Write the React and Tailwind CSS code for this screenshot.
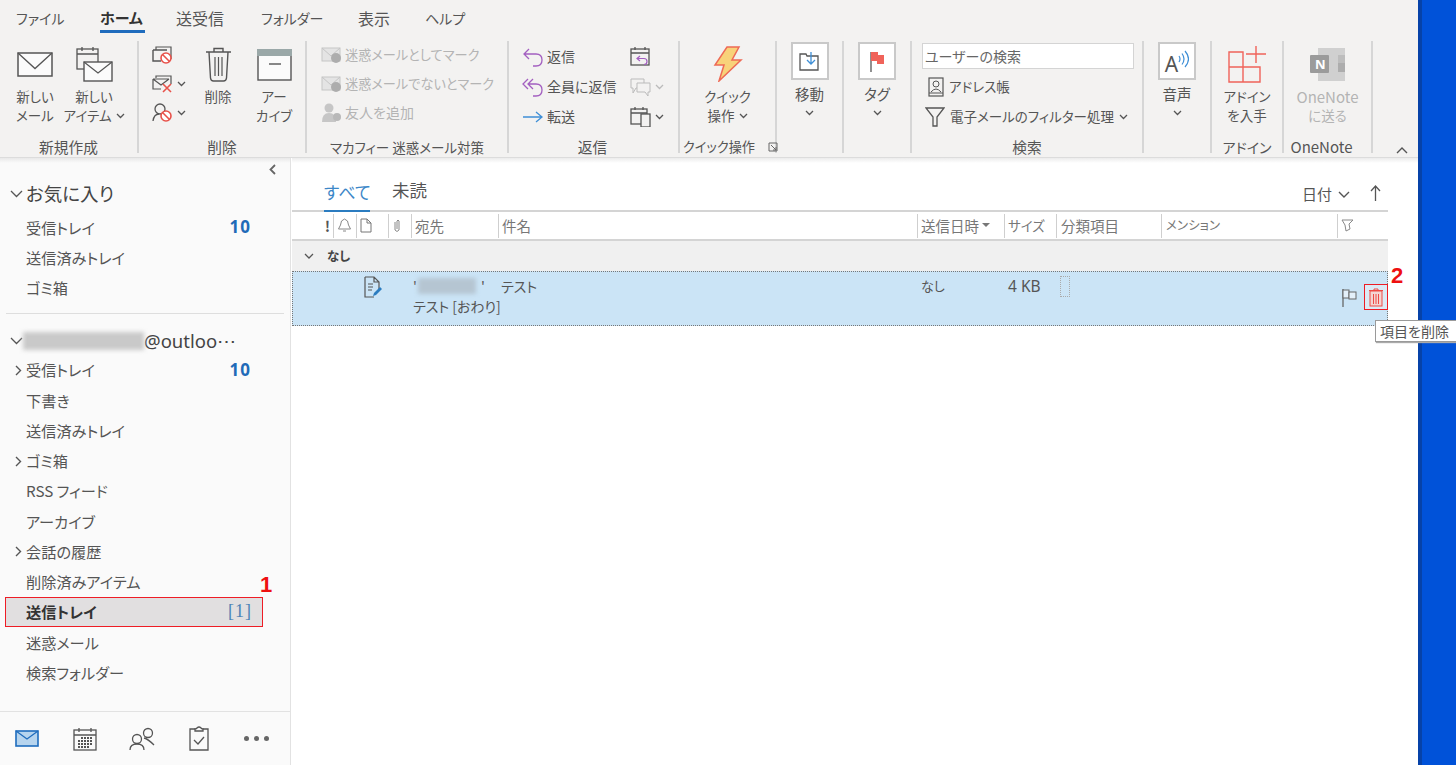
const font = { fontFamily: '"Noto Sans CJK JP","Noto Sans",sans-serif' };

const S = ({ w, h, children, className = "" }) => (
  <svg width={w} height={h} viewBox={`0 0 ${w} ${h}`} fill="none" className={`shrink-0 ${className}`}>{children}</svg>
);
const Chev = ({ c = "#555", className = "" }) => (
  <svg width="9" height="6" viewBox="0 0 9 6" fill="none" className={`shrink-0 ${className}`}><path d="M1 1l3.5 3.5L8 1" stroke={c} strokeWidth="1.3" /></svg>
);
const Big = ({ w, icon, lines, chev, gray, iconH = 46 }) => (
  <div className={`flex flex-col items-center shrink-0 ${gray ? "text-[#b4b4b4]" : ""}`} style={{ width: w }}>
    <div className="flex items-center justify-center" style={{ height: iconH }}>{icon}</div>
    {lines.map((l, i) => (
      <div key={i} className="h-[19px] leading-[19px] flex items-center gap-1 whitespace-nowrap">{l}{chev && i === lines.length - 1 && <Chev />}</div>
    ))}
  </div>
);
const Box = ({ children, label }) => (
  <div className="flex flex-col items-center">
    <div className="w-[38px] h-[38px] bg-white border-2 border-[#c9c9c9] flex items-center justify-center mt-[1px]">{children}</div>
    <div className="h-[19px] leading-[19px] mt-[4px] text-[14.5px]">{label}</div>
    <Chev className="mt-[7px]" />
  </div>
);
const Group = ({ w, label, children, className = "", labelClass = "text-[14.7px]" }) => (
  <div className="flex flex-col shrink-0 border-r-2 border-[#d6d6d6] h-[112px]" style={{ width: w }}>
    <div className={`h-[99px] shrink-0 flex ${className}`}>{children}</div>
    <div className={`h-[13px] leading-[14px] text-center whitespace-nowrap text-[#555] ${labelClass}`}>{label}</div>
  </div>
);
const Mail = ({ w = 36, h = 25 }) => (
  <S w={w} h={h}><rect x="1" y="1" width={w - 2} height={h - 2} fill="#fbfbfb" stroke="#555" strokeWidth="1.5" /><path d={`M1 1l${w / 2 - 1} ${h * 0.62}L${w - 1} 1`} stroke="#555" strokeWidth="1.3" /></S>
);
const NoSign = ({ x, y, r = 5 }) => (
  <g><circle cx={x} cy={y} r={r} fill="#fff" stroke="#e8524a" strokeWidth="1.6" /><path d={`M${x - r * 0.7} ${y - r * 0.7}L${x + r * 0.7} ${y + r * 0.7}`} stroke="#e8524a" strokeWidth="1.6" /></g>
);
const Row = ({ label, right, arrow }) => (
  <div className="h-[30.25px] flex items-center relative pl-[26px] pr-[39px]">
    {arrow && <svg width="7" height="11" viewBox="0 0 7 11" className="absolute left-[15px] top-[10px]" fill="none"><path d="M1 1l4.5 4.5L1 10" stroke="#555" strokeWidth="1.4" /></svg>}
    <span className="flex-1 whitespace-nowrap">{label}</span>
    {right}
  </div>
);
const Cnt = () => <span className="text-[#1f6bb8] font-bold text-[17px] tracking-[1px] [font-family:'Noto_Sans',sans-serif]">10</span>;

const Col = ({ w, children, className = "" }) => (
  <div className={`h-[24px] shrink-0 border-l border-[#cfcfcf] flex items-center pl-[3px] whitespace-nowrap ${className}`} style={{ width: w }}>{children}</div>
);

const Trash = ({ c = "#555", w = 27, h = 36 }) => (
  <svg width={w} height={h} viewBox="0 0 27 36" fill="none">
    <path d="M1 6h25M9 6V2.5h9V6M4 6l1.5 26q.3 3 3 3h10q2.700 0 3-3L23 6" stroke={c} strokeWidth="1.4" />
    <path d="M10 11v19M13.500 11v19M17 11v19" stroke={c} strokeWidth="1.2" />
  </svg>
);

export default function App() {
  return (
    <div className="w-[1456px] h-[765px] overflow-hidden flex relative text-[13.5px] text-[#555] [font-feature-settings:'palt'] bg-white" style={font}>
      <div className="w-[1418px] shrink-0 flex flex-col">
        {/* Ribbon */}
        <div className="h-[158px] bg-[#f3f2f1] shrink-0 border-b border-[#dcdcdc]">
          <div className="h-[36px] flex items-start pt-[7px] pl-[16px] text-[14px] leading-[22px] text-[#555]">
            <span className="w-[84px]">ファイル</span>
            <span className="w-[76px] relative font-bold text-[#333] text-[15px]">ホーム<span className="absolute left-0 top-[23px] w-[45px] h-[3px] bg-[#1f6cbd]" /></span>
            <span className="w-[85px] text-[16px]">送受信</span>
            <span className="w-[97px]">フォルダー</span>
            <span className="w-[67px] text-[16px]">表示</span>
            <span>ヘルプ</span>
          </div>
          <div className="flex pt-[5px] relative">
            <Group w={139} label="新規作成" className="pl-[8px]">
              <Big w={54} icon={<Mail />} lines={["新しい", "メール"]} />
              <Big w={64} icon={
                <S w={37} h={36}><rect x="1" y="3" width="21" height="20" fill="#f3f2f1" stroke="#555" strokeWidth="1.3" /><path d="M1 8h21M6 1v4M17 1v4" stroke="#555" strokeWidth="1.3" /><rect x="8" y="16" width="28" height="19" fill="#fbfbfb" stroke="#555" strokeWidth="1.4" /><path d="M8 16l14 11 14-11" stroke="#555" strokeWidth="1.2" /></S>
              } lines={["新しい", "アイテム"]} chev />
            </Group>
            <Group w={168} label="削除" className="pl-[13px]">
              <div className="w-[44px] flex flex-col pt-[3px] gap-[8px]">
                <div className="flex items-center gap-1 h-[21px]"><S w={21} h={18}><path d="M4 4V1h15v12" stroke="#555" strokeWidth="1.2" /><path d="M1 4h14M1 4v11h8" stroke="#555" strokeWidth="1.4" /><NoSign x={14} y={12} r={5} /></S></div>
                <div className="flex items-center gap-1 h-[21px]"><S w={21} h={18}><path d="M4 3V1h15v8" stroke="#555" strokeWidth="1.2" /><path d="M1 4v10h8M1 4h16M1 4l8 6 8-6" stroke="#555" strokeWidth="1.2" /><path d="M11 9l8 8M19 9l-8 8" stroke="#e8524a" strokeWidth="1.6" /></S><Chev /></div>
                <div className="flex items-center gap-1 h-[21px]"><S w={21} h={20}><circle cx="8" cy="6" r="5" stroke="#555" strokeWidth="1.3" /><path d="M1 18q1-7 6-7" stroke="#555" strokeWidth="1.3" /><NoSign x={14} y={13} r={5} /></S><Chev /></div>
              </div>
              <Big w={44} icon={<Trash />} lines={["削除"]} />
              <div className="w-[8px]" />
              <Big w={52} icon={
                <S w={37} h={33}><rect x="2" y="6" width="33" height="26" fill="#fbfbfb" stroke="#555" strokeWidth="1.4" /><rect x="1" y="1" width="35" height="7" fill="#9aa8a8" /><path d="M13 16h12" stroke="#555" strokeWidth="1.4" /></S>
              } lines={["アー", "カイブ"]} />
            </Group>
            <Group w={202} label="マカフィー 迷惑メール対策" className="flex-col pl-[14px] pt-[3px] text-[#b4b4b4] gap-[8px]" labelClass="text-[13.5px]">
              {[["迷惑メールとしてマーク", "M"], ["迷惑メールでないとマーク", "N"], ["友人を追加", "F"]].map(([t, k]) => (
                <div key={k} className={`flex items-center gap-[3px] h-[21px] whitespace-nowrap ${k === "F" ? "text-[14px]" : "text-[13.2px]"}`}>
                  {k === "F" ? (
                    <S w={21} h={20}><circle cx="8" cy="5" r="4.500" fill="#c6c6c6" /><path d="M1 19q0-9 7-9t7 9z" fill="#c6c6c6" /><circle cx="16" cy="14" r="4" fill="#b8b8b8" /></S>
                  ) : (
                    <S w={21} h={18}><rect x="1" y="2" width="18" height="13" fill="#e4e4e4" stroke="#c6c6c6" /><path d="M1 2l9 8 9-8" stroke="#c6c6c6" /><circle cx="15" cy="12" r="5" fill="#adadad" /></S>
                  )}
                  {t}
                </div>
              ))}
            </Group>
            <Group w={171} label="返信" className="pl-[13px] pt-[5px] text-[14px]" labelClass="text-[14.7px] pr-[2px]">
              <div className="w-[108px] flex flex-col gap-[9px]">
                {[
                  ["返信", <path key="a" d="M7 2L2 7l5 5M2 7h12q6 0 6 6t-6 6h-3" stroke="#a35fc0" strokeWidth="1.3" />],
                  ["全員に返信", <path key="b" d="M6 2L1 7l5 5M11 2L6 7l5 5M6 7h8q6 0 6 6t-6 6h-3" stroke="#a35fc0" strokeWidth="1.3" />],
                  ["転送", <path key="c" d="M1 10h18M14 5l6 5-6 5" stroke="#3f8fd6" strokeWidth="1.3" />],
                ].map(([t, p]) => (
                  <div key={t} className="flex items-center gap-[3px] h-[21px] whitespace-nowrap"><S w={22} h={20}>{p}</S>{t}</div>
                ))}
              </div>
              <div className="flex flex-col gap-[9px]">
                <div className="h-[21px]"><S w={21} h={21}><rect x="1" y="3" width="18" height="16" stroke="#555" strokeWidth="1.3" /><path d="M1 7h18M5 1v3M15 1v3" stroke="#555" strokeWidth="1.3" /><path d="M10 10l-3 2.500 3 2.500M7 12.500h7q3 0 3 3t-3 3" stroke="#a35fc0" strokeWidth="1.2" /></S></div>
                <div className="h-[21px] flex items-center gap-1"><S w={21} h={20}><path d="M1 2h13v9H6l-3 5v-5H1z" stroke="#bbb" /><path d="M7 6h13v9h-2v4l-3-4H7z" fill="#f3f2f1" stroke="#bbb" /></S><Chev c="#bbb" /></div>
                <div className="h-[21px] flex items-center gap-1"><S w={21} h={21}><rect x="1" y="3" width="16" height="15" stroke="#555" strokeWidth="1.3" /><path d="M1 7h16M5 1v3M13 1v3" stroke="#555" strokeWidth="1.3" /><rect x="11" y="8" width="9" height="13" fill="#f3f2f1" stroke="#555" strokeWidth="1.3" /></S><Chev /></div>
              </div>
            </Group>
            <Group w={97} className="justify-center" labelClass="text-[13.2px]" label={<span className="flex items-center pl-[3px] gap-[13px]">クイック操作<S w={10} h={10}><path d="M1 1h8v8H1z M3 3l5 5M8 5v3H5" stroke="#666" /></S></span>}>
              <Big w={97} icon={
                <S w={30} h={36}><path d="M14 1h12l-7 13h9L6 35l5-16H2z" fill="#f8d27a" stroke="#ee6a55" strokeWidth="1.500" /></S>
              } lines={["クイック", "操作"]} chev />
            </Group>
            <Group w={67} className="justify-center">
              <Box label="移動"><S w={21} h={20}><path d="M1 3h6l1 2h11v14H1z" stroke="#555" strokeWidth="1.3" /><path d="M12 1v12M8 9l4 4 4-4" stroke="#3f8fd6" strokeWidth="1.3" /></S></Box>
            </Group>
            <Group w={68} className="justify-center">
              <Box label="タグ"><S w={17} h={21}><path d="M2 1v20" stroke="#555" strokeWidth="1.3" /><path d="M2 1h7v3h6v9H8v-3H2z" fill="#f0635a" /></S></Box>
            </Group>
            <Group w={232} label="検索" className="flex-col pl-[10px] pt-[2px]">
              <div className="w-[212px] h-[26px] bg-white border border-[#d4d4d4] pl-[2px] leading-[24px] text-[#666] text-[14px]">ユーザーの検索</div>
              <div className="flex items-center h-[21px] mt-[7px] pl-[6px] gap-[5px] whitespace-nowrap"><S w={16} h={20}><rect x="1" y="1" width="14" height="18" stroke="#555" strokeWidth="1.2" /><circle cx="8" cy="7" r="3" stroke="#555" /><path d="M3 15q5-6 10 0M1 16h14" stroke="#555" /></S>アドレス帳</div>
              <div className="flex items-center h-[21px] mt-[9px] pl-[3px] gap-[5px] whitespace-nowrap"><S w={20} h={20}><path d="M1 1h18l-7 9v9H8v-9z" stroke="#555" strokeWidth="1.3" /></S>電子メールのフィルター処理<Chev /></div>
            </Group>
            <Group w={68} className="justify-center">
              <Box label="音声"><span className="flex items-center"><span className="text-[21px] leading-[24px] mt-[6px] font-normal text-[#555] [font-family:'Noto_Sans',sans-serif]">A</span><S w={11} h={19} className="mb-[4px]"><path d="M1 6q2 3 0 6M4 3.500q4 5.500 0 11M7 1q7 8 0 16" stroke="#3f8fd6" strokeWidth="1.200" /></S></span></Box>
            </Group>
            <Group w={72} label={<span className="text-[14px]">アドイン</span>} className="justify-center">
              <Big w={70} icon={
                <S w={39} h={39}><path d="M1 7h14v15H1zM1 22h14v15H1zM15 22h17v15H15z" stroke="#f0635a" strokeWidth="1.4" /><path d="M18 9h20M28 1v17" stroke="#f0635a" strokeWidth="1.4" /></S>
              } lines={["アドイン", "を入手"]} />
            </Group>
            <Group w={89} labelClass="text-[15px] pr-[12px]" label="OneNote" className="justify-center">
              <Big w={86} gray icon={
                <S w={37} h={34}><rect x="9" y="1" width="27" height="33" fill="#d0d0d0" /><rect x="29" y="8" width="7" height="8" fill="#bdbdbd" /><rect x="29" y="16" width="7" height="9" fill="#adadad" /><rect x="1" y="8" width="19" height="18" rx="1" fill="#9b9b9b" /><text x="6" y="22" fontSize="13" fontWeight="700" fill="#fff" fontFamily="Noto Sans">N</text></S>
              } lines={[<span className="text-[15px]">OneNote</span>, "に送る"]} />
            </Group>
            <div className="flex-1 relative">
              <svg width="12" height="7" viewBox="0 0 12 7" fill="none" className="absolute left-[23px] top-[106px]"><path d="M1 6l5-5 5 5" stroke="#555" strokeWidth="1.4" /></svg>
            </div>
          </div>
        </div>
        <div className="flex flex-1 min-h-0">
          {/* Sidebar */}
          <div className="w-[291px] shrink-0 bg-[#fafafa] border-r border-[#e2e2e2] flex flex-col relative text-[15.2px] text-[#555]">
            <div className="h-[5px] bg-gradient-to-b from-[#e9e9e9] to-[#fafafa]" />
            <svg width="7" height="11" viewBox="0 0 7 11" className="absolute left-[269px] top-[6px]" fill="none"><path d="M6 1L1.500 5.500 6 10" stroke="#666" strokeWidth="1.800" /></svg>
            <div className="h-[49px] pt-[13px] pl-[10px] flex items-center gap-[3px] text-[18.5px] text-[#444]">
              <svg width="13" height="8" viewBox="0 0 13 8" fill="none"><path d="M1 1l5.500 5.500L12 1" stroke="#555" strokeWidth="1.300" /></svg>お気に入り
            </div>
            <Row label="受信トレイ" right={<Cnt />} />
            <Row label="送信済みトレイ" />
            <Row label="ゴミ箱" />
            <div className="h-[21px] flex items-center pt-[3px] px-[6px] mt-[-1px]"><div className="h-[1px] w-full bg-[#dedede]" /></div>
            <div className="h-[32px] pl-[10px] pt-[4px] flex items-center text-[17.5px] text-[#444]">
              <svg width="13" height="8" viewBox="0 0 13 8" fill="none" className="shrink-0"><path d="M1 1l5.500 5.500L12 1" stroke="#555" strokeWidth="1.300" /></svg>
              <div className="w-[121px] h-[18px] bg-[#c9c9c9] blur-[2px]" />
              <span className="whitespace-nowrap [font-family:'Noto_Sans',sans-serif] text-[18.5px]">@outloo⋯</span>
            </div>
            <Row label="受信トレイ" arrow right={<Cnt />} />
            <Row label="下書き" />
            <Row label="送信済みトレイ" />
            <Row label="ゴミ箱" arrow />
            <Row label="RSS フィード" />
            <Row label="アーカイブ" />
            <Row label="会話の履歴" arrow />
            <Row label="削除済みアイテム" />
            <div className="h-[30.25px] ml-[5px] w-[258px] pl-[20px] pr-[10px] flex items-center bg-[#e1dfe0] border border-[#ee1c25]">
              <span className="flex-1 font-bold text-[#333]">送信トレイ</span>
              <span className="text-[#4d83b5] text-[18px] [font-family:'Liberation_Serif',serif] tracking-[1px]">[1]</span>
            </div>
            <Row label="迷惑メール" />
            <Row label="検索フォルダー" />
            <div className="flex-1" />
            <div className="h-[54px] border-t border-[#e2e2e2] flex items-center pl-[15px] shrink-0">
              <S w={24} h={18}><rect x="1" y="1" width="22" height="15" fill="#b6d4ee" stroke="#1f6cbd" strokeWidth="1.600" /><path d="M1 1l11 8 11-8" stroke="#1f6cbd" strokeWidth="1.300" /></S>
              <S w={24} h={24} className="ml-[34px]"><rect x="1" y="3" width="22" height="20" stroke="#555" strokeWidth="1.300" /><path d="M1 8h22M6 1v4M18 1v4" stroke="#555" strokeWidth="1.300" /><path d="M8 11h12M5 14h15M5 17h15M5 20h11" stroke="#555" strokeWidth="1.800" strokeDasharray="2 1" /></S>
              <S w={26} h={24} className="ml-[32px]"><circle cx="8" cy="12" r="4.500" stroke="#555" strokeWidth="1.300" /><path d="M1 23q0-6 7-6t7 6" stroke="#555" strokeWidth="1.300" /><circle cx="19" cy="6" r="4.500" stroke="#555" strokeWidth="1.300" /><path d="M15 11q4 1 10 7" stroke="#555" strokeWidth="1.300" /></S>
              <S w={20} h={25} className="ml-[34px]"><path d="M6 3H1v21h18V3h-5" stroke="#555" strokeWidth="1.300" /><path d="M6 5V3q1 0 2-1 2-2 4 0 1 1 2 1v2z" stroke="#555" strokeWidth="1.300" /><path d="M5 14l4 4 6-7" stroke="#555" strokeWidth="1.300" /></S>
              <div className="flex gap-[5px] ml-[35px]">
                <span className="w-[5px] h-[5px] rounded-full bg-[#666]" /><span className="w-[5px] h-[5px] rounded-full bg-[#666]" /><span className="w-[5px] h-[5px] rounded-full bg-[#666]" />
              </div>
            </div>
          </div>
          {/* Main */}
          <div className="flex-1 min-w-0 flex flex-col pl-[1px] pr-[30px] bg-white">
            <div className="h-[5px] bg-gradient-to-b from-[#ececec] to-white -mr-[30px] shrink-0" />
            <div className="h-[49px] flex items-end border-b-2 border-[#d4d4d4] pl-[32px] shrink-0">
              <span className="text-[#3c87c8] text-[17px] w-[46px] h-[30px] text-center border-b-[2px] border-[#2b7cc0] mb-[-2px] leading-[20px] whitespace-nowrap">すべて</span>
              <span className="ml-[22px] h-[30px] leading-[20px] text-[17.5px]">未読</span>
              <span className="flex-1" />
              <span className="h-[24px] flex items-center gap-[6px] text-[15px] pb-[1px] mb-[3px]">日付<svg width="12" height="7" viewBox="0 0 12 7" fill="none"><path d="M1 1l5 5 5-5" stroke="#555" strokeWidth="1.400" /></svg></span>
              <svg width="11" height="16" viewBox="0 0 11 16" fill="none" className="ml-[20px] mr-[7px] mb-[9px]"><path d="M5.500 16V1M1 6l4.500-5L10 6" stroke="#555" strokeWidth="1.300" /></svg>
            </div>
            <div className="h-[27px] flex items-center text-[14.5px] text-[#777] border-b-2 border-[#d4d4d4] box-content shrink-0">
              <div className="w-[41px] shrink-0 text-right pr-[3px] font-bold text-[#555]">!</div>
              <Col w={23}><S w={15} h={15}><path d="M7.500 1q-4 1-4 6l-2 4h12l-2-4q0-5-4-6zM6 13h3" stroke="#888" /></S></Col>
              <Col w={32}><S w={12} h={15}><path d="M1 1h6l4 4v9H1zM7 1v4h4" stroke="#777" /></S></Col>
              <Col w={23}><S w={10} h={14}><path d="M3 3v8q2 3 4 0V2q-1-2-2 0v8" stroke="#888" /></S></Col>
              <Col w={87}>宛先</Col>
              <Col w={419}>件名</Col>
              <Col w={87}>送信日時<svg width="8" height="5" viewBox="0 0 8 5" className="ml-[3px]"><path d="M0 0h8L4 4z" fill="#777" /></svg></Col>
              <Col w={52} className="text-[13.5px]">サイズ</Col>
              <Col w={105} className="pl-[4px]">分類項目</Col>
              <Col w={176} className="text-[12.5px] pl-[4px]">メンション</Col>
              <Col w={51}><S w={13} h={13}><path d="M1 1h11L8 5l1 5-4 2-1-6z" stroke="#888" /></S></Col>
            </div>
            <div className="h-[30px] bg-[#f0f0f0] flex items-center text-[12.5px] font-bold text-[#444] pl-[12px] gap-[13px] shrink-0">
              <svg width="10" height="6" viewBox="0 0 10 6" fill="none"><path d="M1 1l4 4 4-4" stroke="#555" strokeWidth="1.300" /></svg>なし
            </div>
            <div className="h-[55px] bg-[#cbe4f6] border border-dotted border-[#777] relative flex shrink-0 text-[14px]">
              <div className="w-[71px] shrink-0" />
              <div className="pt-[4px] w-[49px] shrink-0">
                <S w={18} h={23}><path d="M1 1h9l5 5v9M1 1v20h9M10 1v5h5M4 8h5M4 11h5M4 14h4" stroke="#555" strokeWidth="1.200" /><path d="M9 20l1-3 6-6 2 2-6 6z" fill="#2b7cc0" /></S>
              </div>
              <div className="flex-1 flex flex-col pt-[4px]">
                <div className="h-[20px] leading-[20px] flex items-center whitespace-nowrap">
                  <span className="w-[5px]">'</span>
                  <span className="w-[58px] h-[16px] bg-[#b5c5d2] blur-[2px]" />
                  <span className="ml-[5px] w-[20px]">'</span>
                  <span>テスト</span>
                </div>
                <div className="h-[20px] leading-[20px]">テスト [おわり]</div>
              </div>
              <div className="w-[87px] shrink-0 pt-[4px] leading-[20px] text-[13px] -ml-[1px]">なし</div>
              <div className="w-[52px] shrink-0 pt-[4px] leading-[20px] text-[15.5px] [font-family:'Noto_Sans',sans-serif]">4 KB</div>
              <div className="w-[281px] shrink-0 pt-[4px]"><div className="w-[10px] h-[21px] border border-dotted border-[#aaa]" /></div>
              <div className="w-[46px] shrink-0 pt-[16px] pl-[1px]">
                <S w={15} h={20}><path d="M1 1v18" stroke="#666" strokeWidth="1.300" /><rect x="1" y="2" width="6" height="8" fill="#e4f0fa" stroke="#666" /><rect x="7" y="4" width="7" height="7" fill="#e4f0fa" stroke="#666" /></S>
              </div>
            </div>
          </div>
        </div>
      </div>
      <div className="flex-1 bg-[#0052d9] border-l-[4px] border-[#0642a8]" />
      {/* Overlays */}
      <div className="absolute left-[1364px] top-[284px] w-[24px] h-[26px] border border-[#ee1c25] flex items-center justify-center bg-[#dceaf6]">
        <S w={14} h={19}><path d="M0 2.500h14M5 2.500V1h4v1.500" stroke="#ee4a44" /><rect x="1" y="3" width="12" height="15" fill="#f4d5d3" stroke="#ee4a44" /><path d="M4.500 6v10M7 6v10M9.500 6v10" stroke="#ee4a44" /></S>
      </div>
      <div className="absolute left-[1375px] top-[320px] w-[100px] h-[22px] bg-white border border-[#9a9a9a] shadow-[1px_1px_1px_#aaa] text-[14px] text-[#555] pl-[4px] leading-[20px] whitespace-nowrap">項目を削除</div>
      <div className="absolute left-[260px] top-[574px] text-[#ee1010] text-[22px] font-bold leading-[22px] [font-family:'Liberation_Sans',sans-serif]">1</div>
      <div className="absolute left-[1391px] top-[265px] text-[#ee1010] text-[22px] font-bold leading-[22px] [font-family:'Liberation_Sans',sans-serif]">2</div>
    </div>
  );
}
